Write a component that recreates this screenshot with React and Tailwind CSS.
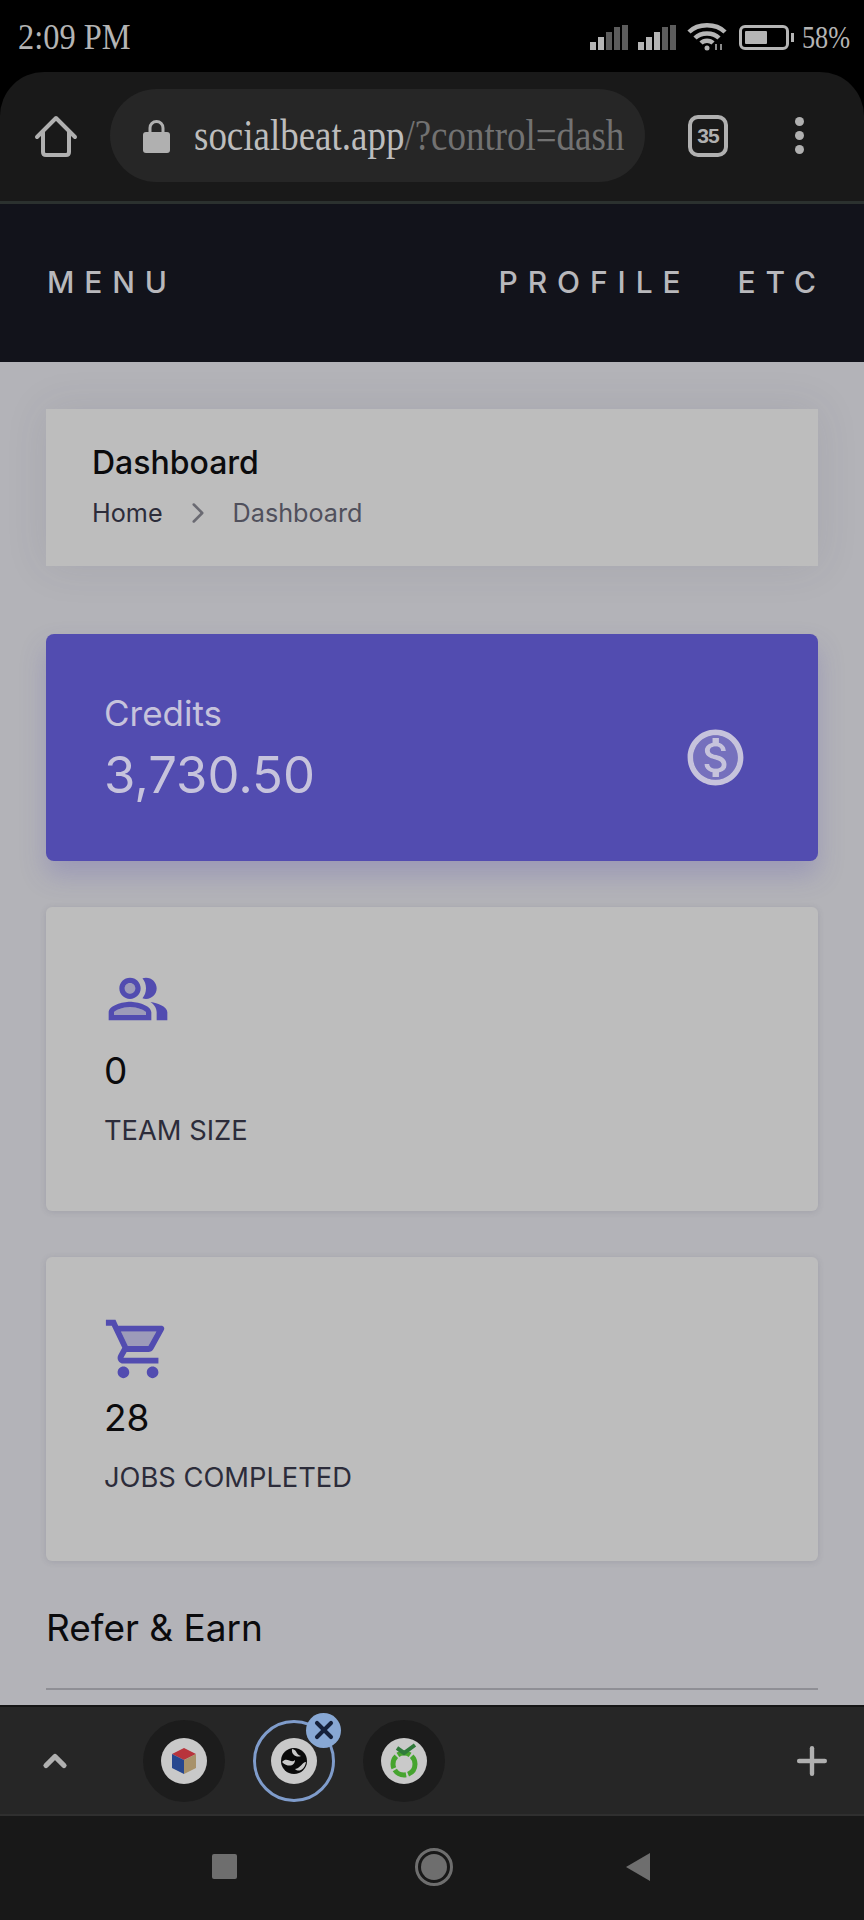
import { ChevronRight, ChevronUp, Plus, X } from 'lucide-react';

function SignalBars({ dim }) {
  const heights = [8, 13, 18, 23, 25];
  return (
    <div className="flex items-end gap-[2px] h-[25px]">
      {heights.map((h, i) => (
        <span
          key={i}
          className={`block w-[6px] ${i >= dim ? 'bg-[#5c5c5c]' : 'bg-[#b5b5b5]'}`}
          style={{ height: h }}
        />
      ))}
    </div>
  );
}

function StatusBar() {
  return (
    <div className="h-[72px] shrink-0 bg-black flex items-center justify-between pl-[18px] pr-[18px] pt-[2px] font-['Liberation_Serif',serif] text-[#b4b4b4]">
      <span className="inline-block origin-left scale-x-[0.9] text-[36px] leading-none font-light">2:09 PM</span>
      <div className="flex items-center -ml-[2px]">
        <SignalBars dim={2} />
        <div className="ml-[10px]"><SignalBars dim={3} /></div>
        <svg className="ml-[11px]" width="40" height="28" viewBox="0 0 40 28" fill="none" stroke="#b5b5b5" strokeWidth="4.5">
          <path d="M2 9 C 11 0, 29 0, 38 9" />
          <path d="M8 15 C 14 9, 26 9, 32 15" />
          <path d="M14 20 C 17 17, 23 17, 26 20" />
          <circle cx="20" cy="25" r="2.5" fill="#b5b5b5" stroke="none" />
          <path d="M29 21 V27 M34 21 V27" strokeWidth="2" stroke="#8a8a8a" />
        </svg>
        <div className="ml-[12px] w-[50px] h-[25px] rounded-[6px] border-[3px] border-[#b5b5b5] p-[3px]">
          <div className="h-full w-[58%] bg-[#b5b5b5] rounded-[1px]" />
        </div>
        <span className="ml-[2px] w-[3px] h-[9px] bg-[#b5b5b5]" />
        <span className="ml-[8px] w-[44px] inline-block origin-left scale-x-[0.82] whitespace-nowrap text-[32px] leading-none">58%</span>
      </div>
    </div>
  );
}

function Toolbar() {
  return (
    <div className="h-[129px] shrink-0 bg-black">
      <div className="h-full bg-[#191919] rounded-t-[44px] flex items-center pb-[2px]">
        <svg className="ml-[34px] shrink-0" width="44" height="44" viewBox="0 0 44 44" fill="none" stroke="#b0b0b0" strokeWidth="4" strokeLinejoin="round" strokeLinecap="round">
          <path d="M3 23 L22 4 L41 23" />
          <path d="M9 18 V38 Q9 41 12 41 H32 Q35 41 35 38 V18" />
        </svg>
        <div className="ml-[32px] w-[535px] h-[93px] shrink-0 rounded-full bg-[#262626] flex items-center">
          <svg className="ml-[33px] shrink-0" width="27" height="34" viewBox="0 0 27 34">
            <path d="M7 15 V9 a6.5 6.5 0 0 1 13 0 V15" fill="none" stroke="#b0b0b0" strokeWidth="3" />
            <rect x="0" y="13" width="27" height="21" rx="3" fill="#b0b0b0" />
          </svg>
          <span className="ml-[24px] inline-block origin-left scale-x-[0.84] whitespace-nowrap text-[44px] leading-none font-['Liberation_Serif',serif] text-[#bdbdbd]">
            socialbeat.app<span className="text-[#727272]">/?control=dash</span>
          </span>
        </div>
        <div className="ml-[43px] w-[40px] h-[42px] shrink-0 rounded-[10px] border-[4px] border-[#b0b0b0] flex items-center justify-center font-['Liberation_Sans',sans-serif] text-[21px] tracking-[-1px] font-bold text-[#b0b0b0]">
          35
        </div>
        <div className="ml-[67px] flex flex-col gap-[5px]">
          <span className="block w-[9px] h-[9px] rounded-full bg-[#b0b0b0]" />
          <span className="block w-[9px] h-[9px] rounded-full bg-[#b0b0b0]" />
          <span className="block w-[9px] h-[9px] rounded-full bg-[#b0b0b0]" />
        </div>
      </div>
    </div>
  );
}

function SiteHeader() {
  return (
    <div className="h-[161px] shrink-0 bg-[#12131b] border-t-[3px] border-[#2b312f] flex items-center justify-between pl-[47px] pr-[44px] pb-[2px] text-[#b8b8bc] text-[30px] font-medium tracking-[0.33em]">
      <span>MENU</span>
      <div className="flex gap-[47px]">
        <span>PROFILE</span>
        <span className="-mr-[6px]">ETC</span>
      </div>
    </div>
  );
}

function Breadcrumb() {
  return (
    <div className="h-[157px] bg-[#bdbdbd] shadow-[0_0_40px_rgba(60,60,90,0.1)] pl-[46px] pt-[35px]">
      <div className="text-[32px] font-medium leading-[38px] text-[#0b0b0d]">Dashboard</div>
      <div className="mt-[13px] flex items-center text-[25.2px] leading-[36px]">
        <span className="text-[#2c2c3a]">Home</span>
        <ChevronRight className="ml-[18px] text-[#6a6a72]" size={34} strokeWidth={1.8} />
        <span className="ml-[18px] text-[#50505c]">Dashboard</span>
      </div>
    </div>
  );
}

function CreditsCard() {
  return (
    <div className="mt-[68px] h-[227px] bg-[#524cb0] rounded-[8px] shadow-[0_14px_26px_rgba(82,76,176,0.25)] flex items-center justify-between pl-[58px] pr-[69px]">
      <div className="pt-[2px] text-[#c6c3dc]">
        <div className="text-[35px] leading-[44px]">Credits</div>
        <div className="mt-[8px] text-[50.8px] leading-[64px]">3,730.50</div>
      </div>
      <svg className="mt-[20px]" width="67" height="67" viewBox="0 0 24 24" fill="#c6c3dc">
        <path opacity=".3" d="M12 4c-4.41 0-8 3.59-8 8s3.59 8 8 8 8-3.59 8-8-3.59-8-8-8zm1.23 13.33V19H10.9v-1.69c-1.5-.31-2.77-1.28-2.86-2.97h1.71c.09.92.72 1.64 2.32 1.64 1.71 0 2.1-.86 2.1-1.39 0-.73-.39-1.41-2.34-1.87-2.17-.53-3.66-1.42-3.66-3.21 0-1.51 1.22-2.48 2.72-2.81V5h2.34v1.71c1.63.39 2.44 1.63 2.49 2.97h-1.71c-.04-.97-.56-1.64-1.94-1.64-1.31 0-2.1.59-2.1 1.43 0 .73.57 1.22 2.34 1.67 1.77.46 3.66 1.22 3.66 3.42-.01 1.6-1.21 2.48-2.74 2.77z" />
        <path d="M12 2C6.48 2 2 6.48 2 12s4.48 10 10 10 10-4.48 10-10S17.52 2 12 2zm0 18c-4.41 0-8-3.59-8-8s3.59-8 8-8 8 3.59 8 8-3.59 8-8 8zm.31-8.86c-1.77-.45-2.34-.94-2.34-1.67 0-.84.79-1.43 2.1-1.43 1.38 0 1.9.66 1.94 1.64h1.71c-.05-1.34-.87-2.57-2.49-2.97V5H10.9v1.69c-1.51.32-2.72 1.3-2.72 2.81 0 1.79 1.49 2.69 3.66 3.21 1.95.46 2.34 1.15 2.34 1.87 0 .53-.39 1.39-2.1 1.39-1.6 0-2.23-.72-2.32-1.64H8.04c.1 1.7 1.36 2.66 2.86 2.97V19h2.34v-1.67c1.52-.29 2.72-1.16 2.73-2.77-.01-2.2-1.9-2.96-3.66-3.42z" />
      </svg>
    </div>
  );
}

function StatCard({ icon, value, label }) {
  return (
    <div className="mt-[46px] h-[304px] bg-[#bdbdbd] rounded-[6px] shadow-[0_1px_6px_rgba(60,60,90,0.15)] pl-[58px] pt-[57px]">
      <div className="h-[82px]">{icon}</div>
      <div className="text-[37px] leading-[44px] text-[#0b0b0d]">{value}</div>
      <div className="mt-[20px] text-[27.3px] leading-[36px] text-[#2c2c3a]">{label}</div>
    </div>
  );
}

const teamIcon = (
  <svg className="ml-[2px] mt-[3px]" width="64" height="64" viewBox="0 0 24 24" fill="#524cb0">
    <path opacity=".3" d="M9 15c-2.7 0-5.8 1.29-6 2.01V18h12v-1c-.2-.71-3.3-2-6-2z" />
    <circle opacity=".3" cx="9" cy="8" r="2" />
    <path d="M16.67 13.13C18.04 14.06 19 15.32 19 17v3h4v-3c0-2.18-3.57-3.47-6.33-3.87z" />
    <path d="M15 12c2.21 0 4-1.79 4-4s-1.79-4-4-4c-.47 0-.91.1-1.33.24C14.5 5.27 15 6.58 15 8s-.5 2.73-1.33 3.76c.42.14.86.24 1.33.24z" />
    <path d="M9 12c2.21 0 4-1.79 4-4s-1.79-4-4-4-4 1.79-4 4 1.79 4 4 4zm0-6c1.1 0 2 .9 2 2s-.9 2-2 2-2-.9-2-2 .9-2 2-2z" />
    <path d="M9 13c-2.67 0-8 1.34-8 4v3h16v-3c0-2.66-5.33-4-8-4zm6 5H3v-.99C3.2 16.29 6.3 15 9 15s5.8 1.29 6 2v1z" />
  </svg>
);

const cartIcon = (
  <svg className="-ml-[1px]" width="70" height="70" viewBox="0 0 24 24" fill="#524cb0">
    <path opacity=".3" d="M15.55 11l2.76-5H6.16l2.37 5z" />
    <path d="M15.55 13c.75 0 1.41-.41 1.75-1.03l3.58-6.49c.37-.66-.11-1.48-.87-1.48H5.21l-.94-2H1v2h2l3.6 7.59-1.35 2.44C4.52 15.37 5.48 17 7 17h12v-2H7l1.1-2h7.45zM6.16 6h12.15l-2.76 5H8.53L6.16 6zM7 18c-1.1 0-1.99.9-1.99 2S5.9 22 7 22s2-.9 2-2-.9-2-2-2zm10 0c-1.1 0-1.99.9-1.99 2s.89 2 1.99 2 2-.9 2-2-.9-2-2-2z" />
  </svg>
);

function TabBubble({ active, children }) {
  return (
    <div className={`relative w-[82px] h-[82px] rounded-full flex items-center justify-center ${active ? 'border-[3px] border-[#7f9ccb]' : 'bg-[#1c1c1c]'}`}>
      <div className="w-[46px] h-[46px] rounded-full bg-[#c9c9c9] flex items-center justify-center">
        {children}
      </div>
      {active && (
        <div className="absolute -top-[10px] -right-[9px] w-[35px] h-[35px] rounded-full bg-[#88a8d4] flex items-center justify-center">
          <X size={28} strokeWidth={3.5} className="text-[#16213a]" />
        </div>
      )}
    </div>
  );
}

function TabStrip() {
  return (
    <div className="h-[111px] shrink-0 bg-[#262626] border-t-[2px] border-[#151515] border-b-[2px] border-b-[#2f2f2f] flex items-center">
      <ChevronUp className="ml-[37px] text-[#b0b0b0]" size={36} strokeWidth={3.5} />
      <div className="ml-[70px] flex gap-[28px]">
        <TabBubble>
          <svg width="28" height="30" viewBox="0 0 28 30">
            <path d="M14 2 L26 8 L14 14 L2 8 Z" fill="#b8343c" />
            <path d="M2 8 L14 14 V28 L2 22 Z" fill="#27478f" />
            <path d="M26 8 L14 14 V28 L26 22 Z" fill="#a8926a" />
          </svg>
        </TabBubble>
        <TabBubble active>
          <svg width="28" height="28" viewBox="0 0 28 28">
            <circle cx="14" cy="14" r="13" fill="#0a0a0a" />
            <path d="M2 15 C 7 9, 11 17, 15 13 C 15 19, 8 21, 2 15 Z" fill="#c9c9c9" />
            <path d="M12 2 C 18 3, 15 7, 21 9 C 17 11, 11 8, 12 2 Z" fill="#c9c9c9" />
            <path d="M26 15 C 22 15, 21 21, 15 22 C 19 26, 25 22, 26 15 Z" fill="#c9c9c9" />
          </svg>
        </TabBubble>
        <TabBubble>
          <svg width="32" height="36" viewBox="0 0 32 36" fill="none">
            <circle cx="16" cy="21" r="11" stroke="#46a42f" strokeWidth="5" strokeDasharray="13 2" />
            <path d="M9 5 L16 10 L27 2" stroke="#2f7a3a" strokeWidth="4" />
          </svg>
        </TabBubble>
      </div>
      <Plus className="ml-auto mr-[30px] text-[#b0b0b0]" size={44} strokeWidth={2.4} />
    </div>
  );
}

function NavBar() {
  return (
    <div className="h-[104px] shrink-0 bg-[#181818] flex items-center justify-center pb-[3px]">
      <span className="block w-[25px] h-[25px] rounded-[2px] bg-[#6e6e6e] -ml-[2px]" />
      <div className="ml-[178px] w-[38px] h-[38px] rounded-full border-[3px] border-[#6e6e6e] p-[3px]">
        <div className="w-full h-full rounded-full bg-[#6e6e6e]" />
      </div>
      <svg className="ml-[172px]" width="26" height="30" viewBox="0 0 26 30">
        <path d="M25 1 V29 L1 15 Z" fill="#6e6e6e" />
      </svg>
    </div>
  );
}

export default function App() {
  return (
    <div className="w-[864px] h-[1920px] flex flex-col overflow-hidden font-['Inter',sans-serif] bg-[#b3b3b8]">
      <StatusBar />
      <Toolbar />
      <SiteHeader />
      <main className="flex-1 min-h-0 overflow-hidden px-[46px] pt-[47px]">
        <Breadcrumb />
        <CreditsCard />
        <StatCard icon={teamIcon} value="0" label="TEAM SIZE" />
        <StatCard icon={cartIcon} value="28" label="JOBS COMPLETED" />
        <h2 className="mt-[45px] text-[37px] leading-[44px] text-[#0b0b0d]">Refer &amp; Earn</h2>
        <div className="mt-[38px] h-[2px] bg-[#8f8f95]" />
      </main>
      <TabStrip />
      <NavBar />
    </div>
  );
}
